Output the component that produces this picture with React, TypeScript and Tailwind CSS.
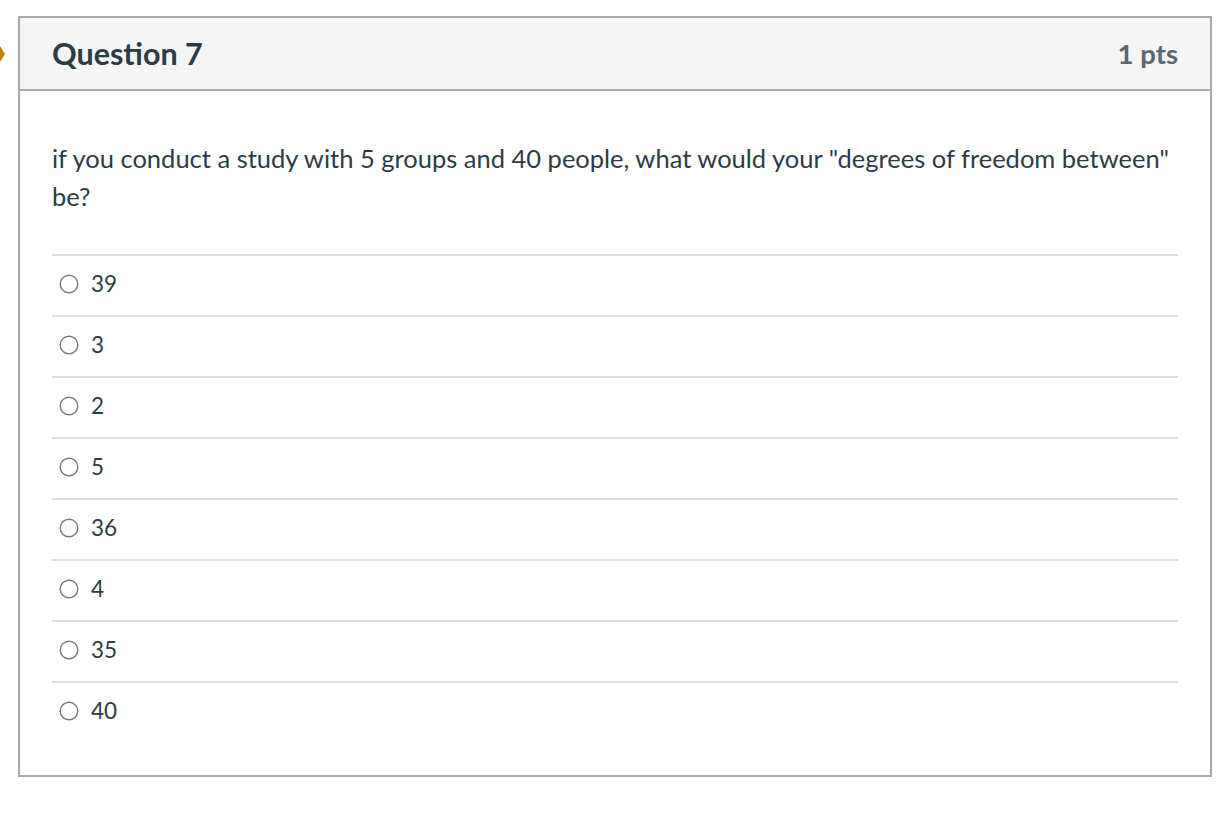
import React from "react";

const answers = ["39", "3", "2", "5", "36", "4", "35", "40"];

function Radio() {
  return (
    <svg width="20" height="20" viewBox="0 0 20 20" className="shrink-0">
      <circle cx="10" cy="10" r="8.8" fill="white" stroke="#7a7a7a" strokeWidth="1.4" />
    </svg>
  );
}

export default function App() {
  return (
    <div
      className="relative min-h-[814px] w-[1228px] bg-white text-[#2d3b45]"
      style={{ fontFamily: "Lato, 'Noto Sans', sans-serif" }}
    >
      <svg className="absolute left-0 top-[46px]" width="6" height="16" viewBox="0 0 6 16">
        <path d="M0 0 L5 8 L0 16 Z" fill="#b8860b" />
      </svg>
      <div className="pt-4 pl-[18px]">
        <div className="w-[1194px] border-2 border-[#a8a8a8]">
          <div className="flex h-[73px] items-center justify-between border-b-2 border-[#a8a8a8] bg-[#f5f5f5] pl-[32px] pr-[32px]">
            <h2 className="text-[30.5px] font-bold leading-none text-[#2d3b45]">Question 7</h2>
            <span className="text-[27.5px] font-bold leading-none text-[#5b6770]">1 pts</span>
          </div>
          <div className="px-[32px] pt-[48px] pb-[33px]">
            <p className="text-[25.5px] leading-[38px] text-[#2d3b45]">
              if you conduct a study with 5 groups and 40 people, what would your "degrees of freedom between" be?
            </p>
            <div className="mt-[39px]">
              {answers.map((a) => (
                <div key={a} className="flex h-[61px] items-center gap-[12px] border-t-2 border-[#dddddd] pl-[7px] pb-[3px]">
                  <Radio />
                  <span className="text-[22.5px] leading-none text-[#2d3b45]">{a}</span>
                </div>
              ))}
            </div>
          </div>
        </div>
      </div>
    </div>
  );
}
